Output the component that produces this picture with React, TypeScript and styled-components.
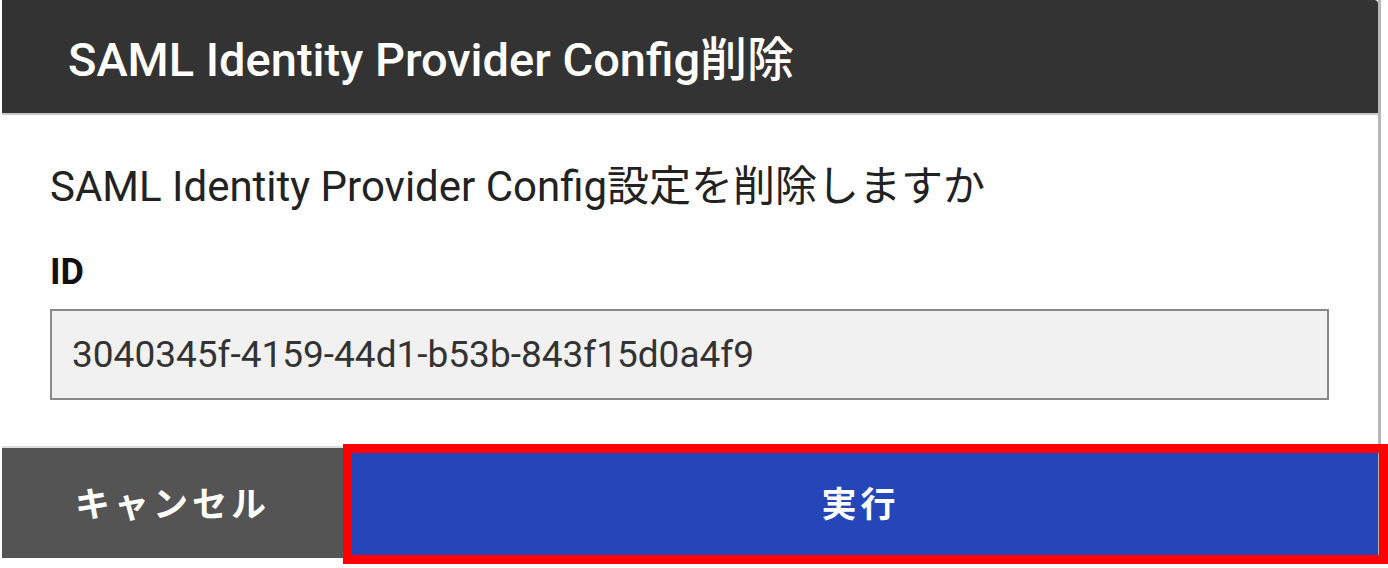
import React from "react";
import styled, { createGlobalStyle } from "styled-components";

const Global = createGlobalStyle`
  html, body { margin: 0; padding: 0; background: #ffffff; }
  body { font-family: Roboto, "Noto Sans CJK JP", sans-serif; }
`;

const Stage = styled.div`
  position: relative;
  width: 1388px;
  height: 568px;
  overflow: hidden;
  background: #ffffff;
`;

const Dialog = styled.div`
  margin-left: 2px;
  width: 1376px;
  height: 558px;
  border-right: 3px solid #b6b6b6;
  display: flex;
  flex-direction: column;
  background: #ffffff;
`;

const Header = styled.div`
  height: 115px;
  flex: none;
  background: #333333;
  border-bottom: 2px solid #c8c8c8;
  display: flex;
  align-items: center;
  padding: 6px 0 0 66px;
  box-sizing: border-box;
  border-top-right-radius: 4px;
`;

const Title = styled.h1`
  margin: 0;
  color: #ffffff;
  font-family: Roboto, "Noto Sans CJK JP", sans-serif;
  font-weight: 500;
  font-size: 47px;
  line-height: 56px;
`;

const Body = styled.div`
  flex: 1;
  padding: 0 48px;
  display: flex;
  flex-direction: column;
`;

const Message = styled.p`
  margin: 48px 0 0 0;
  font-size: 42px;
  line-height: 48px;
  color: #222222;
  font-family: Roboto, "Noto Sans CJK JP", sans-serif;
`;

const Label = styled.div`
  margin-top: 41px;
  font-size: 36px;
  line-height: 40px;
  font-weight: 700;
  color: #111111;
`;

const Field = styled.div`
  margin-top: 17px;
  height: 91px;
  box-sizing: border-box;
  border: 2px solid #8a8a8a;
  background: #f1f1f1;
  display: flex;
  align-items: center;
  padding-left: 20px;
  font-size: 37px;
  color: #333333;
  width: 1279px;
`;

const Footer = styled.div`
  height: 112px;
  box-sizing: border-box;
  flex: none;
  display: flex;
  border-top: 2px solid #dcdcdc;
`;

const Button = styled.button<{ $variant: "cancel" | "primary" }>`
  border: none;
  margin: 0;
  padding: 0 0 4px 0;
  height: 100%;
  display: flex;
  align-items: center;
  justify-content: center;
  color: #ffffff;
  font-family: "Noto Sans CJK JP", sans-serif;
  font-weight: 700;
  font-size: 35px;
  letter-spacing: 4px;
  background: ${(p) => (p.$variant === "cancel" ? "#545454" : "#2446b8")};
  width: ${(p) => (p.$variant === "cancel" ? "341px" : "auto")};
  flex: ${(p) => (p.$variant === "cancel" ? "none" : "1")};
`;

const Highlight = styled.div`
  position: absolute;
  left: 343px;
  top: 444px;
  width: 1045px;
  height: 120px;
  box-sizing: border-box;
  border: 9px solid #ff0000;
  pointer-events: none;
`;

export default function App() {
  return (
    <Stage>
      <Global />
      <Dialog>
        <Header>
          <Title>SAML Identity Provider Config削除</Title>
        </Header>
        <Body>
          <Message>SAML Identity Provider Config設定を削除しますか</Message>
          <Label>ID</Label>
          <Field>3040345f-4159-44d1-b53b-843f15d0a4f9</Field>
        </Body>
        <Footer>
          <Button $variant="cancel">キャンセル</Button>
          <Button $variant="primary">実行</Button>
        </Footer>
      </Dialog>
      <Highlight />
    </Stage>
  );
}
